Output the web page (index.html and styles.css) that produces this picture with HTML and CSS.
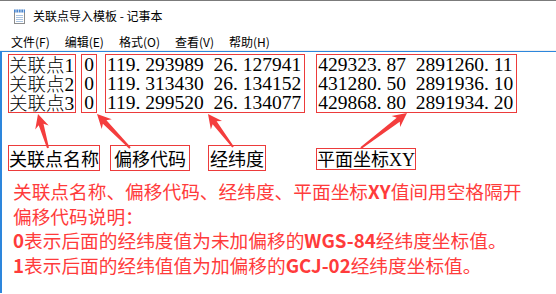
FILE: index.html
```html
<!DOCTYPE html>
<html lang="zh-CN">
<head>
<meta charset="utf-8">
<title>关联点导入模板 - 记事本</title>
<link rel="stylesheet" href="styles.css">
</head>
<body>
<div class="window">
  <div class="titlebar">
    <svg class="app-icon" width="16" height="16" viewBox="0 0 16 16">
      <rect x="3.5" y="3.5" width="10" height="12" fill="#fff" stroke="#8c8c8c"/>
      <path d="M5 7.5h7M5 9.5h7M5 11.5h7M5 13.5h7" stroke="#a9c3e0" stroke-width="1"/>
      <rect x="3" y="1.5" width="11" height="3" fill="#4a86cf"/>
      <path d="M5 1v4M7.5 1v4M10 1v4M12.5 1v4" stroke="#dfe9f5" stroke-width="0.8"/>
    </svg>
    <span class="title-text">关联点导入模板 - 记事本</span>
  </div>
  <div class="menubar">
    <span class="menu-item">文件(F)</span>
    <span class="menu-item">编辑(E)</span>
    <span class="menu-item">格式(O)</span>
    <span class="menu-item">查看(V)</span>
    <span class="menu-item">帮助(H)</span>
  </div>
  <div class="editor">
    <div class="cols">
      <div class="col col-name">
        <div class="row"><span class="cj">关联点</span>1</div>
        <div class="row"><span class="cj">关联点</span>2</div>
        <div class="row"><span class="cj">关联点</span>3</div>
      </div>
      <div class="col col-code">
        <div class="row">0</div>
        <div class="row">0</div>
        <div class="row">0</div>
      </div>
      <div class="col col-ll">
        <div class="row">119<i>.</i>293989<i> </i>26<i>.</i>127941</div>
        <div class="row">119<i>.</i>313430<i> </i>26<i>.</i>134152</div>
        <div class="row">119<i>.</i>299520<i> </i>26<i>.</i>134077</div>
      </div>
      <div class="col col-xy">
        <div class="row">429323<i>.</i>87<i> </i>2891260<i>.</i>11</div>
        <div class="row">431280<i>.</i>50<i> </i>2891936<i>.</i>10</div>
        <div class="row">429868<i>.</i>80<i> </i>2891934<i>.</i>20</div>
      </div>
    </div>
    <div class="labels">
      <span class="label label-name">关联点名称</span>
      <span class="label label-code">偏移代码</span>
      <span class="label label-ll">经纬度</span>
      <span class="label label-xy">平面坐标<span class="serif">XY</span></span>
    </div>
    <div class="notes">
      <p>关联点名称、偏移代码、经纬度、平面坐标<b>XY</b>值间用空格隔开</p>
      <p>偏移代码说明：</p>
      <p><b>0</b>表示后面的经纬度值为未加偏移的<b>WGS-84</b>经纬度坐标值。</p>
      <p><b>1</b>表示后面的经纬值值为加偏移的<b>GCJ-02</b>经纬度坐标值。</p>
    </div>
  </div>
  <svg class="arrows" width="556" height="294" viewBox="0 0 556 294">
    <polygon points="38,113 48.66,124.46 43.50,122.85 48.96,146.72 47.04,147.28 38.70,124.26 35.24,128.40"/>
    <polygon points="97,113 111.77,118.17 106.45,119.15 130.72,146.30 129.28,147.70 102.87,122.63 101.73,127.93"/>
    <polygon points="208,113 222.03,119.93 216.63,120.26 233.80,145.40 232.20,146.60 212.65,123.28 210.87,128.39"/>
    <polygon points="407,112 400.10,126.05 399.76,120.65 361.61,147.80 360.39,146.20 396.74,116.67 391.62,114.91"/>
  </svg>
</div>
</body>
</html>
```
FILE: styles.css
```css
html, body {
  margin: 0;
  padding: 0;
  background: #fff;
}
body {
  width: 556px;
  height: 294px;
  overflow: hidden;
  font-family: "Noto Sans CJK SC", "Noto Sans", sans-serif;
}
.window {
  position: relative;
  width: 556px;
  height: 294px;
  box-sizing: border-box;
  border-top: 1px solid #7b7b7b;
  background: #fff;
}
.titlebar {
  height: 29px;
  display: flex;
  align-items: center;
  padding-left: 11px;
  gap: 6px;
  font-size: 12px;
  color: #000;
}
.app-icon {
  display: block;
  flex: none;
}
.title-text {
  line-height: 16px;
  margin-top: 1px;
}
.menubar {
  height: 20px;
  display: flex;
  align-items: center;
  padding-left: 11px;
  gap: 15px;
  font-size: 12px;
  line-height: 16px;
  color: #000;
  border-bottom: 1px solid #f0f0f0;
}
.menu-item {
  padding-top: 3px;
}
.editor {
  border-top: 1px solid #2d86dc;
  border-left: 2px solid #2d86dc;
  padding-left: 6px;
  height: 242px;
  box-sizing: border-box;
}
.cols {
  display: flex;
  align-items: flex-start;
  margin-top: 2px;
  font-family: "Liberation Serif", "Noto Sans CJK SC", serif;
  font-size: 19.5px;
  color: #000;
}
.col {
  border: 1px solid #ec3b3b;
  padding: 0 1px 0 0;
}
.row {
  height: 19px;
  line-height: 19px;
  white-space: nowrap;
}
.row i {
  font-style: normal;
  display: inline-block;
  width: 0.5em;
}
.cj {
  font-family: "Noto Sans CJK SC", sans-serif;
  font-size: 18.5px;
  font-weight: 300;
}
.col-code {
  margin-left: 5px;
  padding: 0 2px;
}
.col-ll {
  margin-left: 8px;
  padding: 0 3px 0 1px;
}
.col-xy {
  margin-left: 11px;
  padding: 0 3px 0 1px;
}
.labels {
  display: flex;
  align-items: flex-start;
  margin-top: 32px;
  font-size: 18px;
  color: #000;
}
.label {
  border: 1px solid #ec3b3b;
  line-height: 24px;
  white-space: nowrap;
}
.label-code {
  margin-left: 10px;
  padding: 0 3px;
}
.label-ll {
  margin-left: 18px;
  padding: 0 1px;
}
.label-xy {
  margin-left: 50px;
  margin-top: 3px;
  line-height: 18px;
}
.serif {
  font-family: "Liberation Serif", serif;
}
.notes {
  margin-top: 8px;
  padding-left: 5px;
  font-size: 18.7px;
  line-height: 24.5px;
  color: #ff3b3b;
}
.notes p {
  margin: 0;
  white-space: nowrap;
}
.notes b {
  font-weight: 700;
}
.arrows {
  position: absolute;
  left: 0;
  top: 0;
  pointer-events: none;
}
.arrows polygon {
  fill: #f43d3d;
}
```
